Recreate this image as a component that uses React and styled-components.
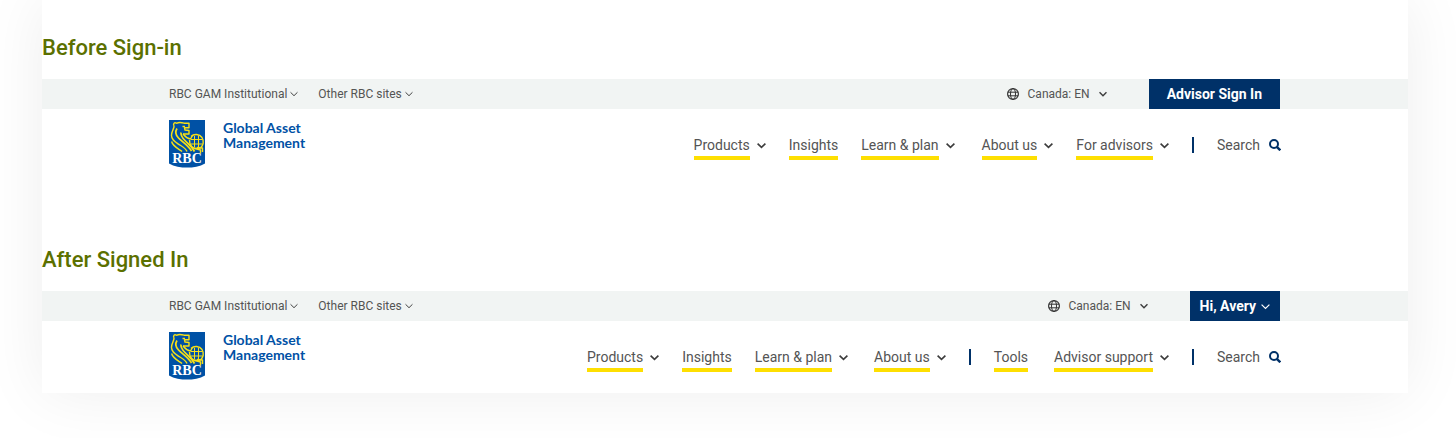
import React from "react";
import styled, { createGlobalStyle } from "styled-components";

const GlobalStyle = createGlobalStyle`
  * { box-sizing: border-box; }
  body {
    margin: 0;
    background: #fff;
    font-family: Roboto, "Liberation Sans", sans-serif;
    color: #545454;
  }
`;

const Page = styled.main`
  padding: 0 48px 45px 42px;
  overflow: hidden;
`;

const Sheet = styled.div`
  display: flex;
  flex-direction: column;
  gap: 64px;
  padding-top: 33px;
  background: #fff;
  box-shadow: 0 0 60px rgba(0, 0, 0, 0.07);
`;

const Title = styled.h2`
  margin: 0 0 16px;
  font-size: 22px;
  font-weight: 500;
  line-height: 30px;
  color: #5b7000;
`;

const TopBar = styled.div`
  display: flex;
  justify-content: space-between;
  height: 30px;
  padding: 0 128px 0 127px;
  background: #f1f4f3;
`;

const Group = styled.div`
  display: flex;
  align-items: center;
  gap: ${(props) => props.$gap}px;
`;

const BarButton = styled.button`
  display: flex;
  align-items: center;
  gap: ${(props) => props.$gap || 3}px;
  padding: 0;
  border: 0;
  background: none;
  color: inherit;
  font: 12px/30px Roboto, sans-serif;
  white-space: nowrap;
`;

const SignIn = styled.button`
  display: flex;
  align-items: center;
  gap: 5px;
  height: 30px;
  padding: 0 ${(props) => props.$pad}px;
  border: 0;
  background: #003168;
  color: #fff;
  font: 700 14px/30px Roboto, sans-serif;
  white-space: nowrap;
`;

const MainBar = styled.div`
  display: flex;
  justify-content: space-between;
  align-items: flex-start;
  height: 72px;
  padding: 11px 127px 0 127px;
`;

const Brand = styled.a`
  display: flex;
  gap: 18px;
  color: #0051a5;
  text-decoration: none;
`;

const BrandName = styled.span`
  font: 700 14px/15px Lato, sans-serif;
`;

const Nav = styled.nav`
  display: flex;
  align-items: center;
  gap: 23px;
  padding-top: 10px;
`;

const Item = styled.div`
  display: flex;
  align-items: center;
  gap: 7px;
  margin-left: ${(props) => props.$lead || 0}px;
`;

const NavLink = styled.a`
  padding-top: 4px;
  border-bottom: 4px solid #fedf01;
  color: inherit;
  font-size: 14px;
  line-height: 22px;
  text-decoration: none;
  white-space: nowrap;
`;

const Divider = styled.span`
  width: 2px;
  height: 16px;
  background: #003168;
`;

const SearchButton = styled.button`
  display: flex;
  align-items: center;
  gap: 9px;
  padding: 0;
  border: 0;
  background: none;
  color: inherit;
  font: 14px/22px Roboto, sans-serif;
`;

function Chevron({ size = 9, weight = 1.6, color = "#3c3c3c" }) {
  return (
    <svg width={size} height={size} viewBox="0 0 9 9" fill="none" stroke={color} strokeWidth={weight} aria-hidden="true">
      <path d="M0.6 2.6 4.5 6.4 8.4 2.6" />
    </svg>
  );
}

function Globe() {
  return (
    <svg width="12" height="12" viewBox="0 0 12 12" fill="none" stroke="#333" aria-hidden="true">
      <circle cx="6" cy="6" r="5.4" strokeWidth="1.2" />
      <ellipse cx="6" cy="6" rx="2.5" ry="5.4" />
      <path d="M.8 4.2h10.4M.8 7.8h10.4" />
    </svg>
  );
}

function SearchIcon() {
  return (
    <svg width="12" height="12" viewBox="0 0 12 12" fill="none" stroke="#003168" aria-hidden="true">
      <circle cx="5" cy="5" r="4" strokeWidth="2" />
      <path d="M7.8 7.8 11.3 11.3" strokeWidth="2.4" />
    </svg>
  );
}

function Shield() {
  return (
    <svg width="36" height="48" viewBox="0 0 36 48" aria-hidden="true">
      <path d="M0 0h36v43.5C31 46.5 24 47.6 18 47.6S5 46.5 0 43.5z" fill="#0051a5" />
      <g fill="none" stroke="#f7e017" strokeWidth="1.4" strokeLinejoin="round">
        <path d="M5 6C3.8 3.5 5.5 1.8 7.5 3.3 10 2 13 2.6 15 3.2h5v4.600h-4.500l.5 2.200 4 .5v3.500h-6" />
        <path d="M5 6c.3 2.5-2.5 5-2.5 9.5 0 4 3 6 6.5 8.3 4.5 3 8 4.5 9 7.7" />
        <path d="M13.5 6.5h2.5M8 8.5c-2.5 4-1.5 6.5 1.500 9.500 4 4 10 7.500 13 13" strokeWidth="1.7" />
        <path d="M12 12.5c-.5 3 1 5 4 8 3.500 3.500 7 6 9.500 11" strokeWidth="1.7" />
        <path d="M2.6 21.5c1 4.5 5.5 6.5 10.5 10M14 14c2.5 3 4 4.500 7.500 5l2-3.500" />
        <path d="M22 16.5c3-3 8.500-2.500 11 1 2.200 3.500 1.500 8-1.500 10.500l-6 .5c-3-1.500-5-4.500-5-8.500" />
        <path d="M26 28.5l5.5 1.5v3.5M28 27.5l5.5.5v4" />
        <path d="M22 19.5h11.5M22 24h11.5M25.5 16v11.5M29.5 15.5v12" strokeWidth="1" />
      </g>
      <text x="18" y="43" textAnchor="middle" fill="#fff" fontFamily="Liberation Serif, serif" fontWeight="700" fontSize="14">
        RBC
      </text>
    </svg>
  );
}

function NavItem({ label, menu, lead }) {
  return (
    <Item $lead={lead}>
      <NavLink href="#">{label}</NavLink>
      {menu && <Chevron />}
    </Item>
  );
}

function Header({ title, account, children }) {
  return (
    <section>
      <Title>{title}</Title>
      <TopBar>
        <Group $gap={20}>
          <BarButton>RBC GAM Institutional <Chevron size={8} weight={1.1} /></BarButton>
          <BarButton>Other RBC sites <Chevron size={8} weight={1.1} /></BarButton>
        </Group>
        <Group $gap={42}>
          <BarButton $gap={9}>
            <Globe />
            <span>Canada: EN</span>
            <Chevron size={8} />
          </BarButton>
          {account}
        </Group>
      </TopBar>
      <MainBar>
        <Brand href="#">
          <Shield />
          <BrandName>Global Asset<br />Management</BrandName>
        </Brand>
        <Nav>
          {children}
          <Divider />
          <SearchButton>Search <SearchIcon /></SearchButton>
        </Nav>
      </MainBar>
    </section>
  );
}

export default function App() {
  return (
    <>
      <GlobalStyle />
      <Page>
        <Sheet>
          <Header title="Before Sign-in" account={<SignIn $pad={18}>Advisor Sign In</SignIn>}>
            <NavItem label="Products" menu />
            <NavItem label="Insights" />
            <NavItem label="Learn & plan" menu />
            <NavItem label="About us" menu lead={4} />
            <NavItem label="For advisors" menu />
          </Header>
          <Header
            title="After Signed In"
            account={<SignIn $pad={10}>Hi, Avery <Chevron weight={1.2} color="#fff" /></SignIn>}
          >
            <NavItem label="Products" menu />
            <NavItem label="Insights" />
            <NavItem label="Learn & plan" menu />
            <NavItem label="About us" menu lead={3} />
            <Divider />
            <NavItem label="Tools" />
            <NavItem label="Advisor support" menu lead={3} />
          </Header>
        </Sheet>
      </Page>
    </>
  );
}
